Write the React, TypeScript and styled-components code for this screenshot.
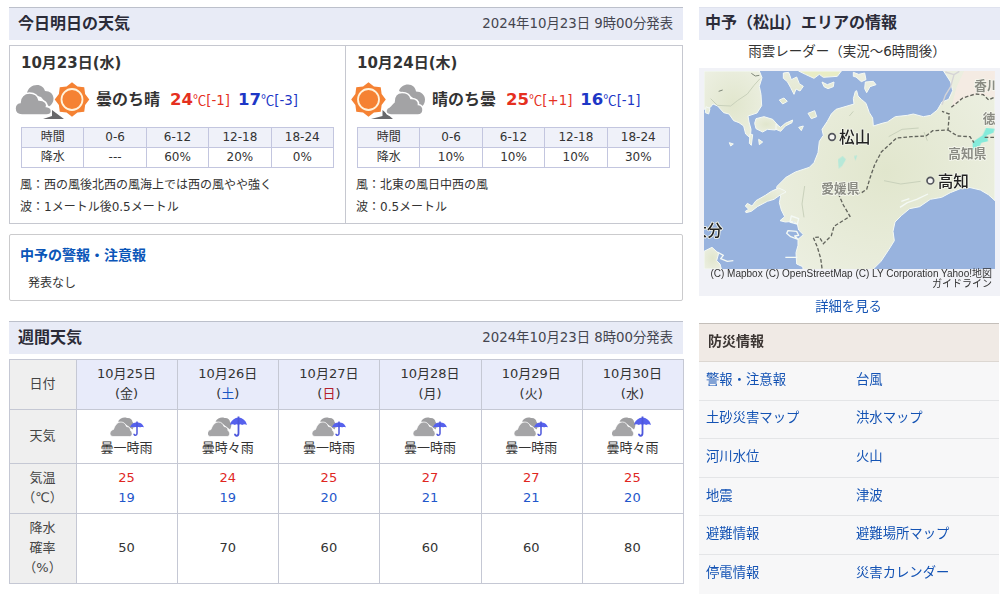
import React from "react";
import styled, { createGlobalStyle } from "styled-components";

const Global = createGlobalStyle`
  *, *::before, *::after { box-sizing: border-box; }
  html, body { margin: 0; padding: 0; background: #fff; }
  body {
    height: 596px;
    overflow: hidden;
    color: #333;
    font-family: "DejaVu Sans", "Noto Sans CJK JP", sans-serif;
    font-size: 13.33px;
    line-height: 20px;
  }
  h2, h3, p { margin: 0; }
  a { color: #1453b4; text-decoration: none; }
`;

const Page = styled.div`
  display: grid;
  grid-template-columns: 674px 301px;
  column-gap: 16px;
  align-items: start;
  padding: 7px 0 0 9px;
  width: 1004px;
`;

const Column = styled.div`
  display: flex;
  flex-direction: column;
`;

const SectionHead = styled.div<{ $plain?: boolean; $gap?: number }>`
  display: flex;
  justify-content: space-between;
  align-items: center;
  height: 33px;
  margin-top: ${(p) => p.$gap ?? 0}px;
  padding: 0 ${(p) => (p.$plain ? "6px 2px" : "10px 1px 9px")};
  background: #e8ebf6;
  border-top: 1px solid ${(p) => (p.$plain ? "#dfe2ee" : "#bcc0cb")};
`;

const SectionTitle = styled.h2`
  font-size: 16px;
  line-height: 24px;
  font-weight: 700;
  color: #2b2b38;
`;

const Issued = styled.span`
  padding-top: 1px;
  font-size: 13.33px;
  color: #44454f;
`;

const TwoDays = styled.div`
  display: grid;
  grid-template-columns: 335px 1fr;
  height: 179px;
  margin-top: 5px;
  border: 1px solid #c6c8d0;
`;

const Day = styled.section`
  padding: 7px 11px 0;
  & + & { border-left: 1px solid #c6c8d0; }
`;

const DayTitle = styled.h3`
  font-size: 15px;
  line-height: 20px;
  font-weight: 700;
`;

const DaySummary = styled.div`
  display: flex;
  align-items: center;
  height: 40px;
  margin: 7px 0 0 -6px;
`;

const DayIcon = styled.svg`
  width: 76px;
  height: 40px;
  flex: none;
`;

const Condition = styled.strong`
  font-size: 16px;
  width: 74px;
  margin-left: 5px;
`;

const Temp = styled.span<{ $low?: boolean }>`
  display: inline-flex;
  align-items: baseline;
  margin-right: 8px;
  color: ${(p) => (p.$low ? "#1d37c6" : "#e5301f")};
  strong { font-size: 16.5px; }
  span { font-family: "Noto Sans CJK JP", sans-serif; }
  em { font-style: normal; font-size: 13.33px; }
`;

const RainTable = styled.table`
  width: 313px;
  margin-top: 7px;
  border-collapse: collapse;
  table-layout: fixed;
  font-size: 12px;
  line-height: 18px;
  text-align: center;
  th, td {
    height: 20px;
    padding: 0 0 1px;
    font-weight: 400;
    border: 1px solid #c3c6df;
  }
  th { background: #eff1f9; }
`;

const Notes = styled.div`
  margin: 6px 0 0 -1px;
  font-size: 12px;
  line-height: 22px;
`;

const Warning = styled.section`
  height: 67px;
  margin-top: 10px;
  padding: 10px;
  border: 1px solid #cbcbcd;
  border-radius: 2px;
  h3 { font-size: 14px; line-height: 20px; }
  h3 a { color: #0a55b8; }
  p { margin: 8px 0 0 8px; font-size: 12px; }
`;

const WeekTable = styled.table`
  width: 675px;
  height: 225px;
  margin-top: 5px;
  border-collapse: collapse;
  table-layout: fixed;
  font-size: 13px;
  line-height: 20px;
  text-align: center;
  th, td {
    padding: 0 1px 1px 0;
    font-weight: 400;
    border: 1px solid #c5c8d4;
  }
  th:first-child { width: 67px; background: #efefef; color: #444; }
`;

const WeekRow = styled.tr<{ $height: number; $head?: boolean }>`
  height: ${(p) => p.$height}px;
  td { background: ${(p) => (p.$head ? "#e8ebfa" : "transparent")}; }
  && > * { padding-bottom: ${(p) => (p.$head ? 2 : 1)}px; }
`;

const Tint = styled.span<{ $color: string }>`
  color: ${(p) => p.$color};
`;

const SmallIcon = styled.svg`
  display: block;
  width: 40px;
  height: 22px;
  margin: 2px auto 0;
`;

const RadarTitle = styled.p`
  margin-top: 1px;
  padding-right: 5px;
  text-align: center;
  font-size: 13.5px;
  line-height: 20px;
`;

const MapFrame = styled.div`
  height: 228px;
  margin-top: 7px;
  padding: 3px 5px;
  background: #f1f2f7;
  svg { display: block; width: 291px; height: 198px; }
`;

const Credit = styled.p`
  padding: 0 3px 0 0;
  font-family: "Liberation Sans", "Noto Sans CJK JP", sans-serif;
  font-size: 10px;
  line-height: 10px;
  text-align: right;
  white-space: nowrap;
`;

const More = styled.a`
  margin: 1px auto 0;
  padding-right: 2px;
  line-height: 20px;
`;

const Disaster = styled.section`
  width: 300px;
  margin-top: 6px;
  background: #f7f7f8;
`;

const DisasterHead = styled.h3`
  height: 39px;
  padding: 7px 9px;
  font-size: 14px;
  line-height: 20px;
  color: #3b3532;
  background: #f0eae5;
  border-top: 1px solid #c4bfba;
  border-bottom: 1px solid #dcd7d2;
`;

const LinkRow = styled.div`
  display: grid;
  grid-template-columns: 150px 1fr;
  align-items: center;
  height: 38.6px;
  padding: 0 7px 2px;
  border-bottom: 1px solid #e4e5e7;
  &:last-child { border-bottom-color: transparent; }
`;

const CloudLeft = () => (
  <g fill="#a3a3a5">
    <path d="M12 13C13 8 17 5 22 5c4 0 7 2.500 8 6 5 0 8.500 3 8.500 7.500 0 3.500-1.500 6-4.500 8L26 17Z" />
    <path
      d="M7 35C2.500 35 0 32 0 28.500c0-3 2-5.500 5-6C5 17 9 13 14.500 13c5 0 8.500 3 9.500 7 6 0 8.500 3.500 7.500 6.500 3 .5 5 2 5 4.500 0 3-2 4-5 4Z"
      stroke="#fff"
      strokeWidth="1.600"
    />
  </g>
);

const CloudRight = () => (
  <g transform="translate(35 0)" fill="#a3a3a5">
    <path d="M13 11C14 7 18 4.500 22 4.500c4.500 0 7.500 3 8 7 5 0 9 3.500 9 8 0 3.500-1.500 6.500-4.500 8L26 17Z" />
    <path
      d="M5 35C1.500 35-.5 33 0 30.500c.3-2 1.500-3 3.500-3.800C5 25.500 6 23.500 8 22 8 16 11 12.500 16 12.500c4.500 0 8 2.500 9 6 5-.2 8 2.500 7.500 6 3 .5 5 3 4.500 6-.4 3-2 4.500-5 4.500Z"
      stroke="#fff"
      strokeWidth="1.600"
    />
  </g>
);

const sunPoints = Array.from({ length: 16 }, (_, i) => {
  const a = (i * Math.PI) / 8;
  const r = i % 2 === 0 ? 17.3 : 14.2;
  return `${(r * Math.sin(a)).toFixed(2)},${(-r * Math.cos(a)).toFixed(2)}`;
}).join(" ");

const Sun = ({ x }: { x: number }) => (
  <g transform={`translate(${x} 19.500)`}>
    <polygon points={sunPoints} fill="#f58233" />
    <circle r="10.500" fill="#f58233" stroke="#fff3dc" strokeWidth="1.800" />
  </g>
);

const CloudThenSun = () => (
  <DayIcon viewBox="0 0 76 40">
    <CloudLeft />
    <path d="M28 39h21L37 30v6Z" fill="#68686b" />
    <Sun x={57} />
  </DayIcon>
);

const SunThenCloud = () => (
  <DayIcon viewBox="0 0 76 40">
    <Sun x={17.5} />
    <path d="M20 39h22L31.500 30v6Z" fill="#68686b" />
    <CloudRight />
  </DayIcon>
);

const CloudRain = ({ often }: { often: boolean }) => (
  <SmallIcon viewBox="0 0 40 22">
    <g transform={often ? "translate(-.5 0)" : "translate(3 0)"}>
      <path d="M8 5.500C10 2 14 .7 17 2c3-.5 5.500 1.500 5.500 4 1.500 1.500 2 4 0 7.500L14 7Z" fill="#9e9ea0" />
      <path
        d="M3 20.500C1 20.500 0 19 0 17.500c0-2 1.500-3.500 3.500-4C5 9 7.500 6 11 6c3 0 4.500 2 5.500 4.500 3 .2 4 2 4 4 2.500 2 2 6-.8 6Z"
        fill="#a5a5a7"
        stroke="#fff"
        strokeWidth=".7"
      />
    </g>
    <g transform={often ? "translate(30.500 .5) scale(1.200 1.400)" : "translate(30 5.500)"}>
      <path
        d="M-7 6C-6 2.500-3 1 0 .8 3 1 6 2.500 7 6c-1-.6-3-.6-4 0-1-.6-2-.6-3 0-1-.6-2-.6-3 0-1-.6-3-.6-4 0Z"
        fill="#5661ed"
      />
      <path d="M0 0v12c0 2.300-3 2.300-3 .3" fill="none" stroke="#4d57dc" strokeWidth="1.500" />
    </g>
  </SmallIcon>
);

const RadarMap = () => (
  <svg viewBox="20 21 873 594" preserveAspectRatio="none">
    <defs>
      <radialGradient id="hills" cx=".5" cy=".5" r=".7">
        <stop offset="0" stopColor="#e1e6cd" />
        <stop offset="1" stopColor="#edf0e3" />
      </radialGradient>
    </defs>
    <rect x="20" y="21" width="873" height="594" fill="#98b3de" />
    <g fill="url(#hills)" stroke="#f4f9f5" strokeWidth="3" strokeLinejoin="round">
      <path d="M20 21H186l8 20-8 26 5 24 2 34-14 22-27 9 3 18 6 22-2 26-14-12-6-24-14-10-16-6-14-20-16-4-18-20-14-6-8 10-19 6Z" />
      <path d="M176 164l24-6 26 8 16 18-8 14-24-2-14 8-20-10-4-16Z" />
      <path d="M236 180l14 10 14-12 22-10-2 8-20 10-14 16-14-6Z" />
      <path d="M470 120l-2-16 6-22 4-2 4 16 10 10 14 12 10 28 10 16 2 24 26-8 16-4 24-16 36-4 18-4 30 8 22-4 20-16 14-24 20-8 12-26-6-26-24-37H893V410l-20-18-24-14-34-8-26 4-30 12-26 14-34 6-32 22-30 6-24 20-20 20-6 28 4 28-16 26-24 36-30 30-20 10H320l-4-24-18-8-2-34 6-22 0-18 16-14-14-14-4-18-12-8-24 2-16-4 14-12-10-20-6-22 4-20-10-12-2-16 28-28 28-16 42-14 14-14 12-30 4-34 12-18-4-18 16-24 12-22 14-14Z" />
      <path d="M262 380l-18-8-22 10-18 12-28 16-12 16-14-8-6 8 10 10-10 6 2 4 16-4 18-14 30-16 20-6 20-14 16-8Z" />
      <path d="M20 562l24-12 20 18-6 22 10 10 4 15H20Z" />
      <path d="M304 21h128l-12 16-42 3-12-9-16 12-26-12Z" fill="#e9edc5" />
      <path d="M258 27l16-2 8 22 16-8 8 20 12 8-10 14-12-6-6 16-10-20-10-18-12-10ZM468 25l16 6 18-4 4 20-14 6-16-14-8-2ZM504 54l24-2 8 10-18 6-10 18-6-12ZM374 54l16 8 20-8-2 14-16 6-12-6ZM332 148l20-8 6 18-16 6ZM246 108l14-6 10 10-14 8ZM304 190l14-4-6 14ZM184 226l12 8-10 8ZM158 210l8 2-4 32-6-6ZM96 236l12 4-8 6ZM26 128l12 6-4 16-10-4Z" />
      <path d="M282 456l22 8-4 16-22-6ZM272 500l26 2 6 12-12 2 10 10-22-8-12-10ZM264 580h36M60 564l18 10-8 10 20 8 18-2M608 430l22-14 28-10 34-16M612 412l24-8" fill="none" strokeWidth="4" />
    </g>
    <path d="M744 24l26 8-10 36-16 26-10 28M770 32l16-10" fill="none" stroke="#d5d4d6" strokeWidth="4" />
    <path d="M893 21H800l-22 48-8 30-8 34 32-28 48-14 51 10Z" fill="#f6eae3" opacity=".8" />
    <g fill="none" stroke="#c9d1bb" strokeWidth="3">
      <path d="M40 104l20 20 40 2 20-16 30-20 20-26 18-20M320 460l-6-40 8-54M456 156l12-14M574 218l40-22 50-4M690 230l-10-26M560 350l50 10 60-8" />
      <path d="M64 82l12-4M162 28l12 8 12-2" stroke="#7f8779" />
    </g>
    <g fill="#93e8dc" opacity=".8">
      <path d="M422 286l14-10 10 10-12 20-10 8ZM470 276l10-2-6 16Z" opacity=".7" />
      <path d="M826 234l30-20 10-22 26 2-4 12-20 8 4 18-20 4-8 16-18 6Z" fill="#6ceada" />
    </g>
    <g fill="none" stroke="#62645c" strokeWidth="4" strokeDasharray="11 6">
      <path d="M374 613l-4-30-10-34-12-28 18-2 12 20 24-24 8-28 48-30-20-34-16-36M460 388h30l18-12 10-34 14-40 20-38 24-22 22-20 44-4 44-2 20-16 46-2 4-48-22-8M752 198l28 18 38 2 12 18M762 130l34-28 38-12 24 2 16 16 16-8M862 220h30" />
    </g>
    <g fontFamily='"Noto Sans CJK JP", sans-serif' paintOrder="stroke" stroke="#f5f7ee" strokeWidth="5" strokeLinejoin="round">
      <g fill="#8b8c84" fontSize="38" fontWeight="700">
        <text x="831" y="77">香川</text>
        <text x="856" y="176">徳</text>
        <text x="753" y="282">高知県</text>
        <text x="372" y="388">愛媛県</text>
      </g>
      <g fill="#222" fontSize="47" fontWeight="500">
        <text x="425" y="237">松山</text>
        <text x="721" y="369">高知</text>
        <text x="-18" y="516">大分</text>
      </g>
    </g>
    <g fill="#f5f5f2" stroke="#54565d" strokeWidth="5">
      <circle cx="404" cy="219" r="10" />
      <circle cx="699" cy="350" r="10" />
    </g>
  </svg>
);

const slots = ["0-6", "6-12", "12-18", "18-24"];

const days = [
  {
    date: "10月23日(水)",
    icon: <CloudThenSun />,
    text: "曇のち晴",
    high: ["24", "[-1]"],
    low: ["17", "[-3]"],
    rain: ["---", "60%", "20%", "0%"],
    wind: "西の風後北西の風海上では西の風やや強く",
    wave: "1メートル後0.5メートル",
  },
  {
    date: "10月24日(木)",
    icon: <SunThenCloud />,
    text: "晴のち曇",
    high: ["25", "[+1]"],
    low: ["16", "[-1]"],
    rain: ["10%", "10%", "10%", "30%"],
    wind: "北東の風日中西の風",
    wave: "0.5メートル",
  },
];

const week = [
  { date: "10月25日", day: "金", often: false, high: 25, low: 19, rain: 50 },
  { date: "10月26日", day: "土", often: true, high: 24, low: 19, rain: 70 },
  { date: "10月27日", day: "日", often: false, high: 25, low: 20, rain: 60 },
  { date: "10月28日", day: "月", often: false, high: 27, low: 21, rain: 60 },
  { date: "10月29日", day: "火", often: false, high: 27, low: 21, rain: 60 },
  { date: "10月30日", day: "水", often: true, high: 25, low: 20, rain: 80 },
];

const dayColor = (day: string) => (day === "土" ? "#1a56c4" : day === "日" ? "#b3202c" : "inherit");

const links = [
  ["警報・注意報", "台風"],
  ["土砂災害マップ", "洪水マップ"],
  ["河川水位", "火山"],
  ["地震", "津波"],
  ["避難情報", "避難場所マップ"],
  ["停電情報", "災害カレンダー"],
];

export default function App() {
  return (
    <>
      <Global />
      <Page>
        <Column>
          <SectionHead>
            <SectionTitle>今日明日の天気</SectionTitle>
            <Issued>2024年10月23日 9時00分発表</Issued>
          </SectionHead>
          <TwoDays>
            {days.map((d) => (
              <Day key={d.date}>
                <DayTitle>{d.date}</DayTitle>
                <DaySummary>
                  {d.icon}
                  <Condition>{d.text}</Condition>
                  <Temp>
                    <strong>{d.high[0]}</strong>
                    <span>℃</span>
                    <em>{d.high[1]}</em>
                  </Temp>
                  <Temp $low>
                    <strong>{d.low[0]}</strong>
                    <span>℃</span>
                    <em>{d.low[1]}</em>
                  </Temp>
                </DaySummary>
                <RainTable>
                  <tbody>
                    <tr>
                      <th>時間</th>
                      {slots.map((s) => (
                        <th key={s}>{s}</th>
                      ))}
                    </tr>
                    <tr>
                      <td>降水</td>
                      {d.rain.map((r, i) => (
                        <td key={i}>{r}</td>
                      ))}
                    </tr>
                  </tbody>
                </RainTable>
                <Notes>
                  <p>風：{d.wind}</p>
                  <p>波：{d.wave}</p>
                </Notes>
              </Day>
            ))}
          </TwoDays>
          <Warning>
            <h3>
              <a href="#">中予の警報・注意報</a>
            </h3>
            <p>発表なし</p>
          </Warning>
          <SectionHead $gap={20}>
            <SectionTitle>週間天気</SectionTitle>
            <Issued>2024年10月23日 8時00分発表</Issued>
          </SectionHead>
          <WeekTable>
            <tbody>
              <WeekRow $height={50} $head>
                <th>日付</th>
                {week.map((w) => (
                  <td key={w.date}>
                    {w.date}
                    <br />(<Tint $color={dayColor(w.day)}>{w.day}</Tint>)
                  </td>
                ))}
              </WeekRow>
              <WeekRow $height={54}>
                <th>天気</th>
                {week.map((w) => (
                  <td key={w.date}>
                    <CloudRain often={w.often} />
                    {w.often ? "曇時々雨" : "曇一時雨"}
                  </td>
                ))}
              </WeekRow>
              <WeekRow $height={50}>
                <th>
                  気温
                  <br />
                  （℃）
                </th>
                {week.map((w) => (
                  <td key={w.date}>
                    <Tint $color="#e0271f">{w.high}</Tint>
                    <br />
                    <Tint $color="#1f57cb">{w.low}</Tint>
                  </td>
                ))}
              </WeekRow>
              <WeekRow $height={70}>
                <th>
                  降水
                  <br />
                  確率
                  <br />
                  （%）
                </th>
                {week.map((w) => (
                  <td key={w.date}>{w.rain}</td>
                ))}
              </WeekRow>
            </tbody>
          </WeekTable>
        </Column>
        <Column>
          <SectionHead $plain>
            <SectionTitle>中予（松山）エリアの情報</SectionTitle>
          </SectionHead>
          <RadarTitle>雨雲レーダー（実況～6時間後）</RadarTitle>
          <MapFrame>
            <RadarMap />
            <Credit>
              (C) Mapbox (C) OpenStreetMap (C) LY Corporation Yahoo!地図
              <br />
              ガイドライン
            </Credit>
          </MapFrame>
          <More href="#">詳細を見る</More>
          <Disaster>
            <DisasterHead>防災情報</DisasterHead>
            {links.map(([a, b]) => (
              <LinkRow key={a}>
                <a href="#">{a}</a>
                <a href="#">{b}</a>
              </LinkRow>
            ))}
          </Disaster>
        </Column>
      </Page>
    </>
  );
}
